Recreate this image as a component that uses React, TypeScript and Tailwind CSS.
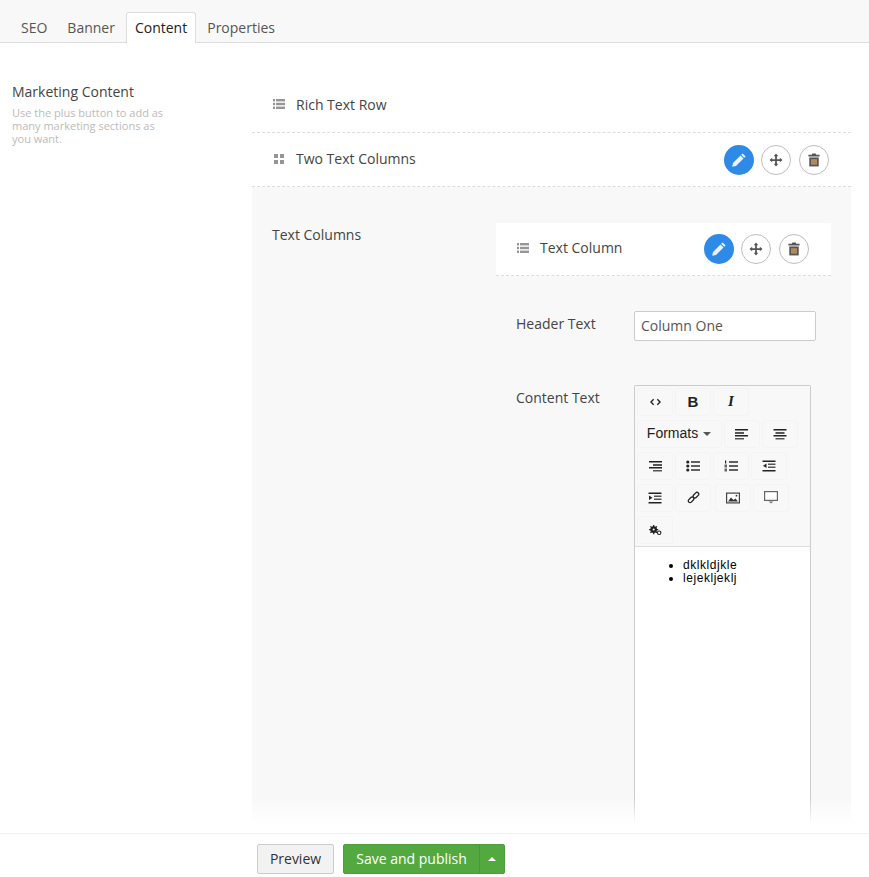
import React from "react";

const Lines = () => (
  <svg viewBox="0 0 12 10" className="w-[12px] h-[10px]" fill="#969696">
    <rect x="0" y="0" width="2" height="2.4" /><rect x="3" y="0" width="9" height="2.4" />
    <rect x="0" y="3.8" width="2" height="2.4" /><rect x="3" y="3.8" width="9" height="2.4" />
    <rect x="0" y="7.6" width="2" height="2.4" /><rect x="3" y="7.6" width="9" height="2.4" />
  </svg>
);
const Grid = () => (
  <svg viewBox="0 0 10 10" className="w-[10px] h-[10px]" fill="#969696">
    <rect x="0" y="0" width="4" height="4" /><rect x="6" y="0" width="4" height="4" />
    <rect x="0" y="6" width="4" height="4" /><rect x="6" y="6" width="4" height="4" />
  </svg>
);
const Pencil = () => (
  <svg viewBox="0 0 16 16" className="w-[16px] h-[16px]" fill="#e8f2fd">
    <path d="M11.6 1.4 14.6 4.4 13.2 5.8 10.2 2.8Z" />
    <path d="M9.5 3.5 12.5 6.5 5 14 1.2 14.8 2 11Z" />
  </svg>
);
const Move = () => (
  <svg viewBox="0 0 16 16" className="w-[14px] h-[14px]" fill="#555">
    <path d="M8 0.5 10.6 3.6H9V7H12.4V5.4L15.5 8 12.4 10.6V9H9V12.4H10.6L8 15.5 5.4 12.4H7V9H3.6V10.6L0.5 8 3.6 5.4V7H7V3.6H5.4Z" />
  </svg>
);
const Trash = () => (
  <svg viewBox="0 0 14 16" className="w-[12px] h-[14px]">
    <path d="M5 0.5H9L9.6 2H13.5V4H0.5V2H4.4Z" fill="#555" />
    <path d="M1.5 5H12.5V15.5H1.5Z" fill="#555" />
    <path d="M3.5 7H10.5V13.5H3.5Z" fill="#b08a5e" />
  </svg>
);

const Actions = () => (
  <div className="flex items-center gap-[8px]">
    <button className="w-[30px] h-[30px] -mr-[1px] rounded-full bg-[#2d8ae6] flex items-center justify-center"><Pencil /></button>
    <button className="w-[30px] h-[30px] rounded-full bg-white border border-[#bdbdbd] flex items-center justify-center"><Move /></button>
    <button className="w-[30px] h-[30px] rounded-full bg-white border border-[#bdbdbd] flex items-center justify-center"><Trash /></button>
  </div>
);

const Tb = ({ w = 36, children }: { w?: number; children: React.ReactNode }) => (
  <div style={{ width: w }} className="h-[28px] shrink-0 rounded-[3px] bg-[#f8f8f8] border border-[#f4f4f4] flex items-center justify-center text-[#222]">
    <div className="flex items-center -mt-[1px]">{children}</div>
  </div>
);

const I = ({ children }: { children: React.ReactNode }) => (
  <svg viewBox="0 0 14 12" className="w-[14px] h-[12px]" fill="#222">{children}</svg>
);
const AlignL = () => <I><rect y="1" width="13" height="1.5" /><rect y="4" width="9" height="2" fill="#555" /><rect y="7" width="13" height="1.5" /><rect y="10" width="9" height="1.5" fill="#555" /></I>;
const AlignC = () => <I><rect x="0.5" y="1" width="13" height="1.5" /><rect x="2.5" y="4" width="9" height="2" fill="#555" /><rect x="0.5" y="7" width="13" height="1.5" /><rect x="2.5" y="10" width="9" height="1.5" fill="#555" /></I>;
const AlignR = () => <I><rect x="1" y="1" width="13" height="1.5" /><rect x="5" y="4" width="9" height="2" fill="#555" /><rect x="1" y="7" width="13" height="1.5" /><rect x="5" y="10" width="9" height="1.5" fill="#555" /></I>;
const Bul = () => <I><circle cx="1.8" cy="2" r="1.6" /><circle cx="1.8" cy="6" r="1.6" /><circle cx="1.8" cy="10" r="1.6" /><rect x="5" y="1.3" width="9" height="1.4" /><rect x="5" y="5.3" width="9" height="1.4" /><rect x="5" y="9.3" width="9" height="1.4" /></I>;
const Num = () => <I><rect x="1" y="0.5" width="1.2" height="3" /><rect x="0.5" y="4.5" width="2.5" height="3" fill="#666" /><rect x="0.5" y="8.5" width="2.5" height="3" fill="#666" /><rect x="5" y="1.3" width="9" height="1.4" /><rect x="5" y="5.3" width="9" height="1.4" /><rect x="5" y="9.3" width="9" height="1.4" /></I>;
const Outdent = () => <I><rect x="0.5" y="0.5" width="13" height="1.5" /><rect x="6" y="3.5" width="7.5" height="1.5" fill="#555" /><rect x="6" y="6.5" width="7.5" height="1.5" fill="#555" /><rect x="0.5" y="10" width="13" height="1.5" /><path d="M4.5 3.5V8L1 5.75Z" /></I>;
const Indent = () => <I><rect x="0.5" y="0.5" width="13" height="1.5" /><rect x="6" y="3.5" width="7.5" height="1.5" fill="#555" /><rect x="6" y="6.5" width="7.5" height="1.5" fill="#555" /><rect x="0.5" y="10" width="13" height="1.5" /><path d="M1 3.5V8L4.5 5.75Z" /></I>;
const Code = () => (
  <svg viewBox="0 0 12 8" className="w-[11px] h-[8px]" fill="none" stroke="#222" strokeWidth="1.5">
    <path d="M4 1 1 4 4 7M8 1 11 4 8 7" />
  </svg>
);
const LinkI = () => (
  <svg viewBox="0 0 14 14" className="w-[13px] h-[13px]" fill="none" stroke="#222" strokeWidth="1.4">
    <rect x="0.9" y="7.6" width="7" height="3.8" rx="1.9" transform="rotate(-45 4.4 9.5)" />
    <rect x="6.1" y="2.6" width="7" height="3.8" rx="1.9" transform="rotate(-45 9.6 4.5)" />
  </svg>
);
const ImageI = () => (
  <svg viewBox="0 0 14 12" className="w-[14px] h-[12px]">
    <rect x="0.6" y="1.1" width="12.8" height="9.8" fill="#fff" stroke="#444" strokeWidth="1.2" />
    <path d="M2 9.5 5 5.5 7.5 8 9.5 6.5 12 9.5Z" fill="#333" />
    <circle cx="10.5" cy="3.7" r="0.9" fill="#333" />
  </svg>
);
const Monitor = () => (
  <svg viewBox="0 0 14 13" className="w-[14px] h-[13px]">
    <rect x="0.6" y="0.6" width="12.8" height="8.8" fill="#fff" stroke="#666" strokeWidth="1.2" />
    <path d="M4.5 10.5H9.5L7 12.5Z" fill="#777" />
  </svg>
);
const Gears = () => (
  <svg viewBox="0 0 14 12" className="w-[13px] h-[11px] mt-[2px]" fill="#222">
    <circle cx="5" cy="5" r="2.6" fill="none" stroke="#222" strokeWidth="2.2" />
    <g stroke="#222" strokeWidth="1.4"><path d="M5 0V10M0 5H10M1.5 1.5L8.5 8.5M8.5 1.5L1.5 8.5" /></g>
    <circle cx="5" cy="5" r="1.1" fill="#f8f8f8" />
    <circle cx="11" cy="8.5" r="1.9" fill="none" stroke="#222" strokeWidth="1.2" />
  </svg>
);

export default function App() {
  return (
    <div className="h-[877px] w-[869px] overflow-hidden bg-white flex flex-col text-[14px] text-[#444]" style={{ fontFamily: '"Open Sans", sans-serif' }}>
      <div className="h-[43px] shrink-0 bg-[#f8f8f8] border-b border-[#dddddd] flex items-end pl-[11px]">
        <div className="px-[10px] h-[31px] leading-[34px] text-[#555]">SEO</div>
        <div className="pl-[10px] pr-[11px] h-[31px] leading-[34px] text-[#555]">Banner</div>
        <div className="px-[8px] h-[31px] leading-[30px] text-[#222] bg-white border border-b-0 border-[#dddddd] rounded-t-[3px] -mb-[1px]">Content</div>
        <div className="px-[11px] h-[31px] leading-[34px] text-[#555]">Properties</div>
      </div>

      <div className="flex-1 min-h-0 relative flex overflow-hidden">
        <div className="w-[252px] shrink-0 pl-[12px] pt-[39px]">
          <div className="text-[#444] leading-[20px]">Marketing Content</div>
          <div className="text-[11px] leading-[13px] text-[#bbbbbb] mt-[4px] w-[160px]">
            Use the plus button to add as many marketing sections as you want.
          </div>
        </div>

        <div className="w-[599px] shrink-0 pt-[35px]">
          <div className="h-[55px] border-b border-dashed border-[#dddddd] flex items-center pl-[21px] pb-[2px] gap-[11px]">
            <Lines />
            <span className="text-[#444]">Rich Text Row</span>
          </div>
          <div className="h-[54px] border-b border-dashed border-[#dddddd] flex items-center justify-between pl-[22px] pr-[22px]">
            <div className="flex items-center gap-[12px] pb-[2px]">
              <Grid />
              <span className="text-[#444]">Two Text Columns</span>
            </div>
            <Actions />
          </div>

          <div className="bg-[#f8f8f8] pt-[36px] pl-[20px] pr-[20px] flex h-[700px]">
            <div className="w-[224px] shrink-0 leading-[24px] text-[#444]">Text Columns</div>
            <div className="w-[335px] shrink-0">
              <div className="h-[53px] bg-white border-b border-dashed border-[#dddddd] flex items-center justify-between pl-[21px] pr-[22px]">
                <div className="flex items-center gap-[11px] pb-[3px]">
                  <Lines />
                  <span className="text-[#444]">Text Column</span>
                </div>
                <Actions />
              </div>

              <div className="flex pl-[20px] mt-[35px]">
                <div className="w-[118px] shrink-0 text-[#444] leading-[26px]">Header Text</div>
                <div className="w-[182px] h-[30px] bg-white border border-[#cccccc] rounded-[2px] pl-[6px] leading-[28px] text-[#555]">Column One</div>
              </div>

              <div className="flex pl-[20px] mt-[44px]">
                <div className="w-[118px] shrink-0 text-[#444] leading-[26px]">Content Text</div>
                <div className="w-[177px] border border-[#cccccc] border-b-0 rounded-t-[2px] bg-white h-[600px]">
                  <div className="bg-[#f8f8f8] border-b border-[#dddddd] pl-[2px] pt-[2px] h-[161px] flex flex-col gap-[4px]">
                    <div className="flex gap-[2px]">
                      <Tb><Code /></Tb>
                      <Tb><span className="font-bold text-[15px] leading-none" style={{ fontFamily: '"Liberation Sans", sans-serif' }}>B</span></Tb>
                      <Tb><span className="font-bold italic text-[15px] leading-none" style={{ fontFamily: '"Liberation Serif", serif' }}>I</span></Tb>
                    </div>
                    <div className="flex gap-[2px]">
                      <Tb w={85}>
                        <span className="text-[14px] mr-[5px] leading-none text-[#222] -mt-[2px] -ml-[1px]" style={{ fontFamily: '"Liberation Sans", sans-serif' }}>Formats</span>
                        <span className="w-0 h-0 border-x-[4px] border-x-transparent border-t-[4px] border-t-[#555] mt-[1px]" />
                      </Tb>
                      <Tb><AlignL /></Tb>
                      <Tb><AlignC /></Tb>
                    </div>
                    <div className="flex gap-[2px]">
                      <Tb><AlignR /></Tb>
                      <Tb><Bul /></Tb>
                      <Tb><Num /></Tb>
                      <Tb><Outdent /></Tb>
                    </div>
                    <div className="flex gap-[2px]">
                      <Tb><Indent /></Tb>
                      <Tb><LinkI /></Tb>
                      <div className="ml-[2px]"><Tb><ImageI /></Tb></div>
                      <Tb><Monitor /></Tb>
                    </div>
                    <div className="flex gap-[2px]">
                      <Tb><Gears /></Tb>
                    </div>
                  </div>
                  <ul className="list-disc pl-[48px] pt-[12px] text-[12px] leading-[13px] tracking-[0.55px] text-black" style={{ fontFamily: '"Liberation Sans", sans-serif' }}>
                    <li>dklkldjkle</li>
                    <li>lejekljeklj</li>
                  </ul>
                </div>
              </div>
            </div>
          </div>
        </div>

        <div className="absolute left-0 right-0 bottom-0 h-[36px] bg-[linear-gradient(to_bottom,rgba(255,255,255,0),#ffffff_75%)]" />
      </div>

      <div className="h-[44px] shrink-0 bg-white border-t border-[#f0f0f0] flex items-start pt-[10px] pl-[257px] gap-[9px]">
        <button className="h-[30px] w-[77px] pb-[2px] rounded-[2px] bg-[#f2f2f2] border border-[#cccccc] text-[#333] text-[14px]">Preview</button>
        <div className="flex h-[30px] rounded-[2px] bg-[#53a93f] border border-[#4c9f39] text-white">
          <button className="w-[135px] pb-[2px] text-[14px] text-center">Save and publish</button>
          <button className="w-[25px] border-l border-[#479a34] flex items-center justify-center">
            <span className="w-0 h-0 border-x-[4px] border-x-transparent border-b-[4px] border-b-white" />
          </button>
        </div>
      </div>
    </div>
  );
}
